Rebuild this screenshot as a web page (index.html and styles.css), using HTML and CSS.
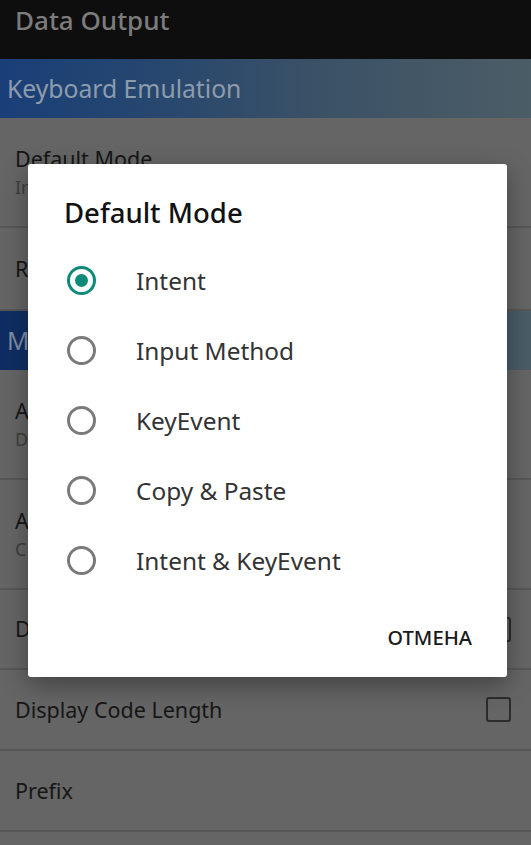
FILE: index.html
```html
<!DOCTYPE html>
<html>
<head>
<meta charset="utf-8">
<link rel="stylesheet" href="styles.css">
</head>
<body>
<div class="screen">
  <div class="appbar">Data Output</div>
  <div class="section section-grad">Keyboard Emulation</div>
  <div class="row row-two">
    <div class="row-title">Default Mode</div>
    <div class="row-sub">Intent</div>
  </div>
  <div class="row row-one row-tall"><div class="row-title">Reset</div></div>
  <div class="section section-solid">Message</div>
  <div class="row row-two">
    <div class="row-title">Add</div>
    <div class="row-sub">Disabled</div>
  </div>
  <div class="row row-two">
    <div class="row-title">Auto</div>
    <div class="row-sub">CR</div>
  </div>
  <div class="row row-one row-check row-short">
    <div class="row-title">Display</div>
    <span class="checkbox"></span>
  </div>
  <div class="row row-one row-check">
    <div class="row-title">Display Code Length</div>
    <span class="checkbox"></span>
  </div>
  <div class="row row-one"><div class="row-title">Prefix</div></div>
  <div class="row row-one"></div>

  <div class="dialog">
    <div class="dialog-title">Default Mode</div>
    <ul class="options">
      <li class="option"><span class="radio checked"></span><span class="option-label">Intent</span></li>
      <li class="option"><span class="radio"></span><span class="option-label">Input Method</span></li>
      <li class="option"><span class="radio"></span><span class="option-label">KeyEvent</span></li>
      <li class="option"><span class="radio"></span><span class="option-label">Copy &amp; Paste</span></li>
      <li class="option"><span class="radio"></span><span class="option-label">Intent &amp; KeyEvent</span></li>
    </ul>
    <div class="dialog-actions"><span class="btn">ОТМЕНА</span></div>
  </div>
</div>
</body>
</html>
```
FILE: styles.css
```css
* { box-sizing: border-box; }
html, body {
  margin: 0;
  padding: 0;
  background: #656565;
  font-family: "Noto Sans", Roboto, "Liberation Sans", sans-serif;
}
.screen {
  position: relative;
  width: 531px;
  height: 845px;
  overflow: hidden;
  background: #656565;
}
.appbar {
  height: 59px;
  background: #0e0e0e;
  color: #7c7c7c;
  font-size: 26px;
  font-weight: 500;
  padding-left: 15px;
  line-height: 40px;
}
.section {
  height: 59px;
  display: flex;
  align-items: center;
  padding-left: 7px;
  font-size: 24.7px;
  color: #8d9cac;
}
.section-grad {
  background: linear-gradient(90deg, #1a3f78 0%, #27476e 30%, #3b5166 60%, #4b5d66 100%);
}
.section-solid {
  background: linear-gradient(90deg, #0f2d63 0%, #1a3a6a 40%, #3e5468 80%, #4b5d66 100%);
  color: #7e8ea4;
}
.row {
  border-bottom: 2px solid #575757;
  padding-left: 15px;
  display: flex;
  flex-direction: column;
  justify-content: center;
  white-space: nowrap;
}
.row-two { height: 110px; }
.row-one { height: 81px; }
.row-tall { height: 83px; }
.row-short { height: 80px; }
.row-title {
  font-size: 21.5px;
  color: #161616;
  line-height: 30px;
}
.row-sub {
  font-size: 18px;
  color: #3e3e3e;
  line-height: 26px;
}
.row-check {
  flex-direction: row;
  align-items: center;
  justify-content: space-between;
  padding-right: 20px;
}
.checkbox {
  width: 25px;
  height: 25px;
  border: 2.5px solid #2c2c2c;
  border-radius: 3px;
}
.dialog {
  position: absolute;
  left: 28px;
  top: 164px;
  width: 479px;
  height: 513px;
  background: #ffffff;
  border-radius: 3px;
  box-shadow: 0 8px 24px rgba(0,0,0,0.35);
}
.dialog-title {
  padding: 30px 0 0 36px;
  font-size: 27.5px;
  font-weight: 500;
  line-height: 38px;
  height: 81px;
  color: #111;
}
.options {
  list-style: none;
  margin: 0;
  padding: 0;
}
.option {
  height: 70.2px;
  display: flex;
  align-items: center;
  padding-left: 39px;
}
.radio {
  width: 29px;
  height: 29px;
  border: 3px solid #7a7a7a;
  border-radius: 50%;
  display: flex;
  align-items: center;
  justify-content: center;
  flex-shrink: 0;
}
.radio.checked {
  border-color: #108a78;
}
.radio.checked::after {
  content: "";
  width: 13px;
  height: 13px;
  border-radius: 50%;
  background: #108a78;
}
.option-label {
  margin-left: 40px;
  font-size: 24.4px;
  color: #333;
}
.dialog-actions {
  display: flex;
  justify-content: flex-end;
  align-items: center;
  height: 82px;
  padding-right: 35px;
}
.btn {
  font-size: 20.2px;
  font-weight: 500;
  color: #1a1a1a;
}
```
